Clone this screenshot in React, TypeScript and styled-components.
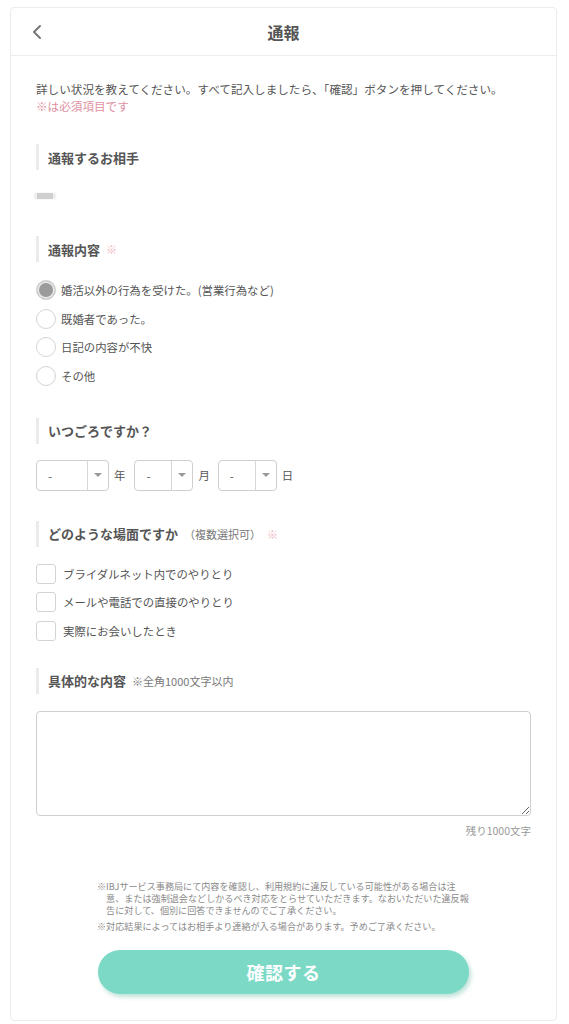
import styled, { createGlobalStyle } from "styled-components";

const GlobalStyle = createGlobalStyle`
  body {
    margin: 0;
    background: #ffffff;
    font-family: "Noto Sans CJK JP", "Noto Sans", sans-serif;
    color: #555;
  }
`;

const Card = styled.div`
  margin: 7px 12px 4px 10px;
  border: 1px solid #ececec;
  border-radius: 4px;
  background: #fff;
`;

const Header = styled.header`
  height: 47px;
  display: flex;
  align-items: center;
  justify-content: center;
  position: relative;
  border-bottom: 1px solid #ededed;
`;

const BackButton = styled.button`
  position: absolute;
  left: 18px;
  top: 14px;
  width: 16px;
  height: 20px;
  padding: 0;
  border: 0;
  background: none;
  display: flex;
  align-items: center;
  justify-content: center;
`;

const Title = styled.h1`
  margin: 0;
  font-size: 16px;
  font-weight: 700;
  color: #555;
`;

const Body = styled.div`
  padding: 25px 25px 26px 25px;
`;

const Intro = styled.p`
  margin: 0;
  font-size: 11.6px;
  line-height: 17px;
  color: #555;
`;

const Required = styled.span`
  color: #e0909f;
`;

const Section = styled.section<{ $top: number }>`
  margin-top: ${(p) => p.$top}px;
`;

const Heading = styled.h2`
  margin: 0;
  height: 26px;
  display: flex;
  align-items: center;
  gap: 6px;
  padding-left: 9px;
  border-left: 3px solid #ebebeb;
  font-size: 13px;
  font-weight: 700;
  color: #555;
`;

const HeadingNote = styled.span`
  font-size: 11px;
  font-weight: 400;
  color: #777;
`;

const Mark = styled.span`
  font-size: 11px;
  font-weight: 400;
  color: #f0b4bd;
`;

const Placeholder = styled.div`
  margin: 23px 0 0 1px;
  width: 16px;
  height: 6px;
  background: #cfcfcf;
  box-shadow: -3px 0 2px #ececec, 3px 0 2px #ececec;
`;

const OptionList = styled.ul<{ $top: number }>`
  list-style: none;
  margin: ${(p) => p.$top}px 0 0;
  padding: 0;
  display: flex;
  flex-direction: column;
  gap: 8.5px;
`;

const Option = styled.li`
  display: flex;
  align-items: center;
  gap: 5px;
  height: 20px;
  font-size: 11.4px;
  color: #555;
`;

const Radio = styled.span<{ $checked?: boolean }>`
  box-sizing: border-box;
  width: 20px;
  height: 20px;
  border-radius: 50%;
  border: 1px solid #d4d4d4;
  background: ${(p) => (p.$checked ? "#9b9b9b" : "#fff")};
  box-shadow: ${(p) => (p.$checked ? "inset 0 0 0 2px #e6e6e6" : "none")};
  flex-shrink: 0;
`;

const Checkbox = styled.span`
  box-sizing: border-box;
  width: 20px;
  height: 20px;
  border-radius: 3px;
  border: 1px solid #d4d4d4;
  background: #fff;
  flex-shrink: 0;
  margin-right: 2px;
`;

const DateRow = styled.div`
  margin-top: 16px;
  display: flex;
  align-items: center;
`;

const Select = styled.div<{ $width: number }>`
  box-sizing: border-box;
  width: ${(p) => p.$width}px;
  height: 31px;
  border: 1px solid #cfcfcf;
  border-radius: 4px;
  display: flex;
  align-items: stretch;
  font-size: 12px;
  color: #666;
`;

const SelectValue = styled.span`
  flex: 1;
  display: flex;
  align-items: center;
  padding-left: 11px;
`;

const SelectArrow = styled.span`
  width: 20px;
  border-left: 1px solid #d6d6d6;
  display: flex;
  align-items: center;
  justify-content: center;
  &::after {
    content: "";
    border-left: 4px solid transparent;
    border-right: 4px solid transparent;
    border-top: 4px solid #999;
  }
`;

const Unit = styled.span<{ $gap: number }>`
  margin: 0 ${(p) => p.$gap}px 0 5px;
  font-size: 11.4px;
  color: #555;
`;

const TextArea = styled.textarea`
  display: block;
  box-sizing: border-box;
  margin-top: 17px;
  width: 100%;
  height: 105px;
  border: 1px solid #cfcfcf;
  border-radius: 4px;
  resize: vertical;
  font-family: inherit;
`;

const Counter = styled.div`
  margin-top: 7px;
  text-align: right;
  font-size: 10.5px;
  color: #999;
`;

const Notes = styled.div`
  margin: 42px 0 0 61px;
  width: 375px;
  font-size: 9.1px;
  line-height: 12px;
  color: #8a8a8a;
  p {
    margin: 0 0 4px;
    padding-left: 1em;
    text-indent: -1em;
  }
`;

const SubmitButton = styled.button`
  display: block;
  margin: 18px auto 0;
  width: 371px;
  height: 44px;
  border: 0;
  border-radius: 22px;
  background: #7bd9c6;
  box-shadow: 2px 3px 4px rgba(110, 190, 170, 0.45);
  color: #fff;
  font-family: inherit;
  font-size: 18px;
  font-weight: 700;
  letter-spacing: 0.5px;
`;

const reasons = [
  "婚活以外の行為を受けた。(営業行為など)",
  "既婚者であった。",
  "日記の内容が不快",
  "その他",
];

const scenes = [
  "ブライダルネット内でのやりとり",
  "メールや電話での直接のやりとり",
  "実際にお会いしたとき",
];

const App = () => {
  return (
    <>
      <GlobalStyle />
      <Card>
        <Header>
          <BackButton aria-label="戻る">
            <svg width="10" height="16" viewBox="0 0 10 16">
              <polyline
                points="8,2 2,8 8,14"
                fill="none"
                stroke="#777"
                strokeWidth="2"
                strokeLinecap="round"
                strokeLinejoin="round"
              />
            </svg>
          </BackButton>
          <Title>通報</Title>
        </Header>
        <Body>
          <Intro>
            詳しい状況を教えてください。すべて記入しましたら、「確認」ボタンを押してください。
          </Intro>
          <Intro>
            <Required>※は必須項目です</Required>
          </Intro>

          <Section $top={29}>
            <Heading>通報するお相手</Heading>
            <Placeholder />
          </Section>

          <Section $top={37}>
            <Heading>
              通報内容<Mark>※</Mark>
            </Heading>
            <OptionList $top={18}>
              {reasons.map((r, i) => (
                <Option key={r}>
                  <Radio $checked={i === 0} />
                  {r}
                </Option>
              ))}
            </OptionList>
          </Section>

          <Section $top={32}>
            <Heading>いつごろですか？</Heading>
            <DateRow>
              <Select $width={73}>
                <SelectValue>-</SelectValue>
                <SelectArrow />
              </Select>
              <Unit $gap={9}>年</Unit>
              <Select $width={59}>
                <SelectValue>-</SelectValue>
                <SelectArrow />
              </Select>
              <Unit $gap={8}>月</Unit>
              <Select $width={59}>
                <SelectValue>-</SelectValue>
                <SelectArrow />
              </Select>
              <Unit $gap={0}>日</Unit>
            </DateRow>
          </Section>

          <Section $top={30}>
            <Heading>
              どのような場面ですか<HeadingNote>（複数選択可）</HeadingNote>
              <Mark>※</Mark>
            </Heading>
            <OptionList $top={17}>
              {scenes.map((s) => (
                <Option key={s}>
                  <Checkbox />
                  {s}
                </Option>
              ))}
            </OptionList>
          </Section>

          <Section $top={27}>
            <Heading>
              具体的な内容<HeadingNote>※全角1000文字以内</HeadingNote>
            </Heading>
            <TextArea />
            <Counter>残り1000文字</Counter>
          </Section>

          <Notes>
            <p>
              ※IBJサービス事務局にて内容を確認し、利用規約に違反している可能性がある場合は注意、または強制退会などしかるべき対応をとらせていただきます。なおいただいた違反報告に対して、個別に回答できませんのでご了承ください。
            </p>
            <p>※対応結果によってはお相手より連絡が入る場合があります。予めご了承ください。</p>
          </Notes>
          <SubmitButton>確認する</SubmitButton>
        </Body>
      </Card>
    </>
  );
};

export default App;
